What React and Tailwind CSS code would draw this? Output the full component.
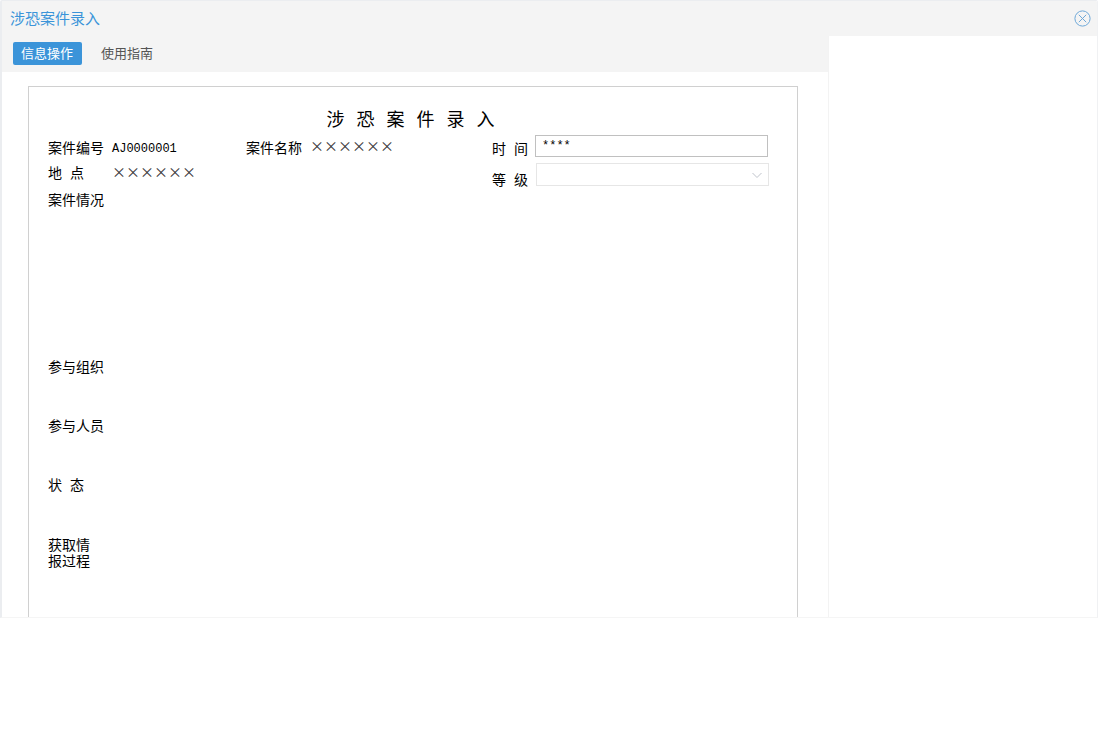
import React from 'react';

const mono = "font-['Liberation_Mono','Noto_Sans_CJK_SC',monospace]";

function CloseIcon() {
  return (
    <svg width="17" height="17" viewBox="0 0 17 17" fill="none" stroke="#6ea8d8" strokeWidth="1">
      <circle cx="8.5" cy="8.500" r="7.6" />
      <path d="M4.8 4.8l7.4 7.4M12.200 4.8l-7.400 7.400" />
    </svg>
  );
}

function Label({ children, className = '' }) {
  return <span className={`text-[14px] leading-[16px] text-black ${className}`}>{children}</span>;
}

// two character labels are spread out by a fixed gap
function Spaced({ a, b }) {
  return (
    <>
      <span className="mr-2">{a}</span>
      {b}
    </>
  );
}

export default function App() {
  return (
    <div className="h-[737px] bg-white font-['Noto_Sans_CJK_SC',sans-serif]">
      <div className="h-[618px] flex flex-col overflow-hidden border-t border-l-2 border-r border-b border-t-[#ebedf0] border-l-[#ebedf0] border-r-[#f0f1f3] border-b-[#f5f5f5] rounded-t-[2px]">
        <div className="h-[35px] shrink-0 bg-[#f4f4f4] flex items-center justify-between pl-2 pr-[6px]">
          <span className="text-[15px] text-[#3b94d9]">涉恐案件录入</span>
          <CloseIcon />
        </div>

        <div className="flex-1 flex min-h-0">
          <div className="w-[826px] shrink-0 flex flex-col min-h-0">
            <div className="h-[36px] shrink-0 bg-[#f4f4f4] flex items-center pl-[11px] pb-[2px]">
              <div className="h-[23px] pl-2 pr-[9px] flex items-center bg-[#3b94d9] rounded-[2px] text-[13px] text-white">信息操作</div>
              <div className="ml-[19px] text-[13px] text-[#555555]">使用指南</div>
            </div>

            <div className="flex-1 min-h-0 pt-[14px] pl-[26px] overflow-hidden">
              <div className="w-[770px] h-full border-t border-l border-r border-[#d0d0d0] pl-[19px]">
                <div className="h-[48px] flex items-end justify-center pb-[5px] pr-[12px] shrink-0">
                  <span className="text-[18px] leading-[24px] tracking-[12px] text-black">涉恐案件录入</span>
                </div>

                <div className="flex items-start h-[28px]">
                  <Label className="w-[64px] mt-[4px]">案件编号</Label>
                  <span className={`w-[134px] mt-[6px] text-[12px] leading-[16px] text-black ${mono}`}>AJ0000001</span>
                  <Label className="w-[64px] mt-[4px]">案件名称</Label>
                  <span className="w-[182px] mt-[2px] text-[14px] leading-[16px] text-black opacity-80">××××××</span>
                  <Label className="w-[43px] mt-[5px]"><Spaced a="时" b="间" /></Label>
                  <div className={`w-[233px] h-[22px] border border-[#c0c0c0] pl-[6px] text-[12px] leading-[20px] text-black ${mono}`}>****</div>
                </div>

                <div className="flex items-start h-[28px]">
                  <Label className="w-[64px] mt-[1px]"><Spaced a="地" b="点" /></Label>
                  <span className="w-[380px] text-[14px] leading-[16px] text-black opacity-80">××××××</span>
                  <Label className="w-[44px] mt-[8px]"><Spaced a="等" b="级" /></Label>
                  <div className="w-[233px] h-[23px] border border-[#e6e6e6] flex items-center justify-end pr-[5px]">
                    <svg width="12" height="12" viewBox="0 0 12 12" fill="none" stroke="#c0c4cc" strokeWidth="1">
                      <path d="M1.5 4l4.5 4.5L10.500 4" />
                    </svg>
                  </div>
                </div>

                <div className="h-[167px] -mt-[5px]"><Label>案件情况</Label></div>
                <div className="h-[59px]"><Label>参与组织</Label></div>
                <div className="h-[59px]"><Label>参与人员</Label></div>
                <div className="h-[65px]"><Label><Spaced a="状" b="态" /></Label></div>
                <div className="w-[48px]"><Label className="block">获取情报过程</Label></div>
              </div>
            </div>
          </div>

          <div className="flex-1 bg-white border-l border-[#f3f3f3]" />
        </div>
      </div>
    </div>
  );
}
